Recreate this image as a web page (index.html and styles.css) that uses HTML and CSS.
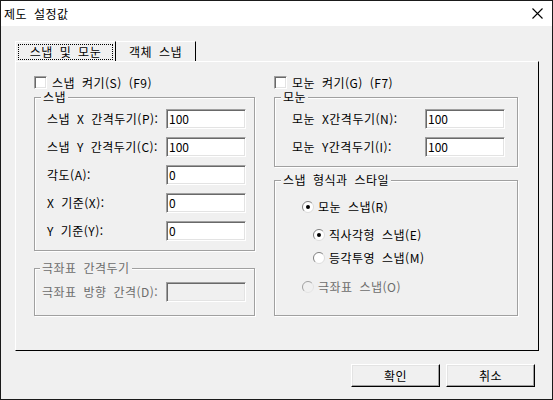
FILE: index.html
```html
<!DOCTYPE html>
<html lang="ko">
<head>
<meta charset="utf-8">
<title>제도 설정값</title>
<link rel="stylesheet" href="styles.css">
</head>
<body>
<div class="window">
  <div class="titlebar">
    <span class="title">제도 설정값</span>
    <svg class="close" width="11" height="11" viewBox="0 0 11 11"><path d="M0.5 0.5 L10.5 10.5 M10.5 0.5 L0.5 10.5" stroke="#000" stroke-width="1.1" fill="none"/></svg>
  </div>
  <div class="body">
    <div class="tabs">
      <div class="tab tab-first"><span class="focus">스냅 및 모눈</span></div>
      <div class="tab tab-second">객체 스냅</div>
    </div>
    <div class="panel">
      <div class="col col-left">
        <div class="check-row"><span class="checkbox"></span><span>스냅 켜기(S) (F9)</span></div>
        <div class="group group-snap">
          <span class="group-title">스냅</span>
          <div class="field"><span>스냅 X 간격두기(P):</span><span class="input">100</span></div>
          <div class="field"><span>스냅 Y 간격두기(C):</span><span class="input">100</span></div>
          <div class="field"><span>각도(A):</span><span class="input">0</span></div>
          <div class="field"><span>X 기준(X):</span><span class="input">0</span></div>
          <div class="field"><span>Y 기준(Y):</span><span class="input">0</span></div>
        </div>
        <div class="group group-polar disabled">
          <span class="group-title title-polar">극좌표 간격두기</span>
          <div class="field"><span>극좌표 방향 간격(D):</span><span class="input input-disabled"></span></div>
        </div>
      </div>
      <div class="col col-right">
        <div class="check-row"><span class="checkbox"></span><span>모눈 켜기(G) (F7)</span></div>
        <div class="group group-grid">
          <span class="group-title">모눈</span>
          <div class="field"><span>모눈 X간격두기(N):</span><span class="input">100</span></div>
          <div class="field"><span>모눈 Y간격두기(I):</span><span class="input">100</span></div>
        </div>
        <div class="group group-style">
          <span class="group-title">스냅 형식과 스타일</span>
          <div class="radio-row r1">
            <svg class="radio" width="12" height="12" viewBox="0 0 12 12"><circle cx="6" cy="6" r="5.5" fill="#fff"/><path d="M2.1 9.9 A5.5 5.5 0 0 1 9.9 2.1" stroke="#808080" fill="none"/><path d="M9.9 2.1 A5.5 5.5 0 0 1 2.1 9.9" stroke="#dcdcdc" fill="none"/><circle cx="6" cy="6" r="2" fill="#000"/></svg>
            <span>모눈 스냅(R)</span>
          </div>
          <div class="radio-row r2 indent">
            <svg class="radio" width="12" height="12" viewBox="0 0 12 12"><circle cx="6" cy="6" r="5.5" fill="#fff"/><path d="M2.1 9.9 A5.5 5.5 0 0 1 9.9 2.1" stroke="#808080" fill="none"/><path d="M9.9 2.1 A5.5 5.5 0 0 1 2.1 9.9" stroke="#dcdcdc" fill="none"/><circle cx="6" cy="6" r="2" fill="#000"/></svg>
            <span>직사각형 스냅(E)</span>
          </div>
          <div class="radio-row r3 indent">
            <svg class="radio" width="12" height="12" viewBox="0 0 12 12"><circle cx="6" cy="6" r="5.5" fill="#fff"/><path d="M2.1 9.9 A5.5 5.5 0 0 1 9.9 2.1" stroke="#808080" fill="none"/><path d="M9.9 2.1 A5.5 5.5 0 0 1 2.1 9.9" stroke="#dcdcdc" fill="none"/></svg>
            <span>등각투영 스냅(M)</span>
          </div>
          <div class="radio-row r4 disabled">
            <svg class="radio" width="12" height="12" viewBox="0 0 12 12"><circle cx="6" cy="6" r="5.5" fill="#f0f0f0"/><path d="M2.1 9.9 A5.5 5.5 0 0 1 9.9 2.1" stroke="#a0a0a0" fill="none"/><path d="M9.9 2.1 A5.5 5.5 0 0 1 2.1 9.9" stroke="#e3e3e3" fill="none"/></svg>
            <span>극좌표 스냅(O)</span>
          </div>
        </div>
      </div>
    </div>
    <div class="buttons">
      <span class="button">확인</span>
      <span class="button">취소</span>
    </div>
  </div>
</div>
</body>
</html>
```
FILE: styles.css
```css
* { box-sizing: border-box; }
html, body { margin: 0; padding: 0; }
body {
  font-family: "Noto Sans CJK KR", "Noto Sans", sans-serif;
  font-size: 12px;
  line-height: 14px;
  color: #000;
  background: #fff;
  letter-spacing: 0.5px;
  word-spacing: 3px;
}
.window {
  width: 553px;
  height: 400px;
  border: 1px solid #1a1a1a;
  display: flex;
  flex-direction: column;
  background: #f0f0f0;
}
.titlebar {
  height: 25px;
  background: #fff;
  display: flex;
  align-items: center;
  justify-content: space-between;
  padding: 0 9px 0 3px;
}
.title { font-size: 12px; }
.body {
  flex: 1;
  padding: 15px 17px 0 14px;
  display: flex;
  flex-direction: column;
}
.tabs {
  display: flex;
  height: 20px;
}
.tab {
  height: 20px;
  border-top: 1px solid #fff;
  border-right: 1px solid #000;
  display: flex;
  align-items: center;
  justify-content: center;
}
.tab-first { width: 101px; border-left: 1px solid #fff; padding: 1px 2px 0 2px; }
.tab-second { width: 80px; padding-top: 1px; }
.focus {
  width: 95px;
  height: 16px;
  border: 1px dotted #000;
  display: flex;
  align-items: center;
  justify-content: center;
}
.panel {
  width: 524px;
  height: 290px;
  border-top: 1px solid #fff;
  border-left: 1px solid #fff;
  border-right: 1px solid #000;
  border-bottom: 1px solid #000;
  padding: 14px 0 0 18px;
  display: flex;
  gap: 19px;
}
.col { display: flex; flex-direction: column; }
.col-left { width: 221px; }
.col-right { width: 244px; }
.check-row {
  height: 13px;
  display: flex;
  align-items: center;
  gap: 5px;
}
.checkbox {
  width: 13px;
  height: 13px;
  background: #fff;
  border: 1px solid;
  border-color: #a0a0a0 #fff #fff #a0a0a0;
  box-shadow: inset 1px 1px 0 #696969, inset -1px -1px 0 #e3e3e3;
}
.group {
  position: relative;
  border: 1px solid #a0a0a0;
  box-shadow: inset 1px 1px 0 #fff, 1px 1px 0 #fff;
  display: flex;
  flex-direction: column;
}
.group-title {
  position: absolute;
  top: -8px;
  left: 6px;
  padding: 0 2px;
  background: #f0f0f0;
  line-height: 14px;
  white-space: nowrap;
}
.field {
  height: 20px;
  display: flex;
  align-items: center;
  justify-content: space-between;
  white-space: nowrap;
}
.input {
  width: 80px;
  height: 20px;
  background: #fff;
  border: 1px solid;
  border-color: #a0a0a0 #fff #fff #a0a0a0;
  box-shadow: inset 1px 1px 0 #696969, inset -1px -1px 0 #e3e3e3;
  padding: 2px 0 0 2px;
  line-height: 14px;
  letter-spacing: 0;
}
.input-disabled { background: #f0f0f0; }
.group-snap {
  margin-top: 8px;
  height: 154px;
  padding: 11px 8px 9px 12px;
  gap: 8px;
}
.group-polar {
  margin-top: 17px;
  height: 48px;
  padding: 13px 8px 13px 7px;
}
.title-polar { left: 5px; }
.disabled { color: #6d6d6d; }
.group-grid {
  margin-top: 8px;
  height: 70px;
  padding: 11px 12px 9px 17px;
  gap: 8px;
}
.group-style {
  margin-top: 13px;
  height: 136px;
  padding: 19px 0 0 27px;
}
.radio-row {
  height: 14px;
  display: flex;
  align-items: center;
  gap: 4px;
  white-space: nowrap;
}
.indent { margin-left: 11px; }
.r2 { margin-top: 14px; }
.r3 { margin-top: 9px; }
.r4 { margin-top: 15px; }
.radio { flex: none; }
.buttons {
  margin-top: 13px;
  display: flex;
  justify-content: flex-end;
  gap: 6px;
}
.button {
  width: 89px;
  height: 23px;
  background: #f0f0f0;
  border: 1px solid;
  border-color: #fff #000 #000 #fff;
  box-shadow: inset -1px -1px 0 #a0a0a0, inset 1px 1px 0 #e3e3e3;
  display: flex;
  align-items: center;
  justify-content: center;
}
```
